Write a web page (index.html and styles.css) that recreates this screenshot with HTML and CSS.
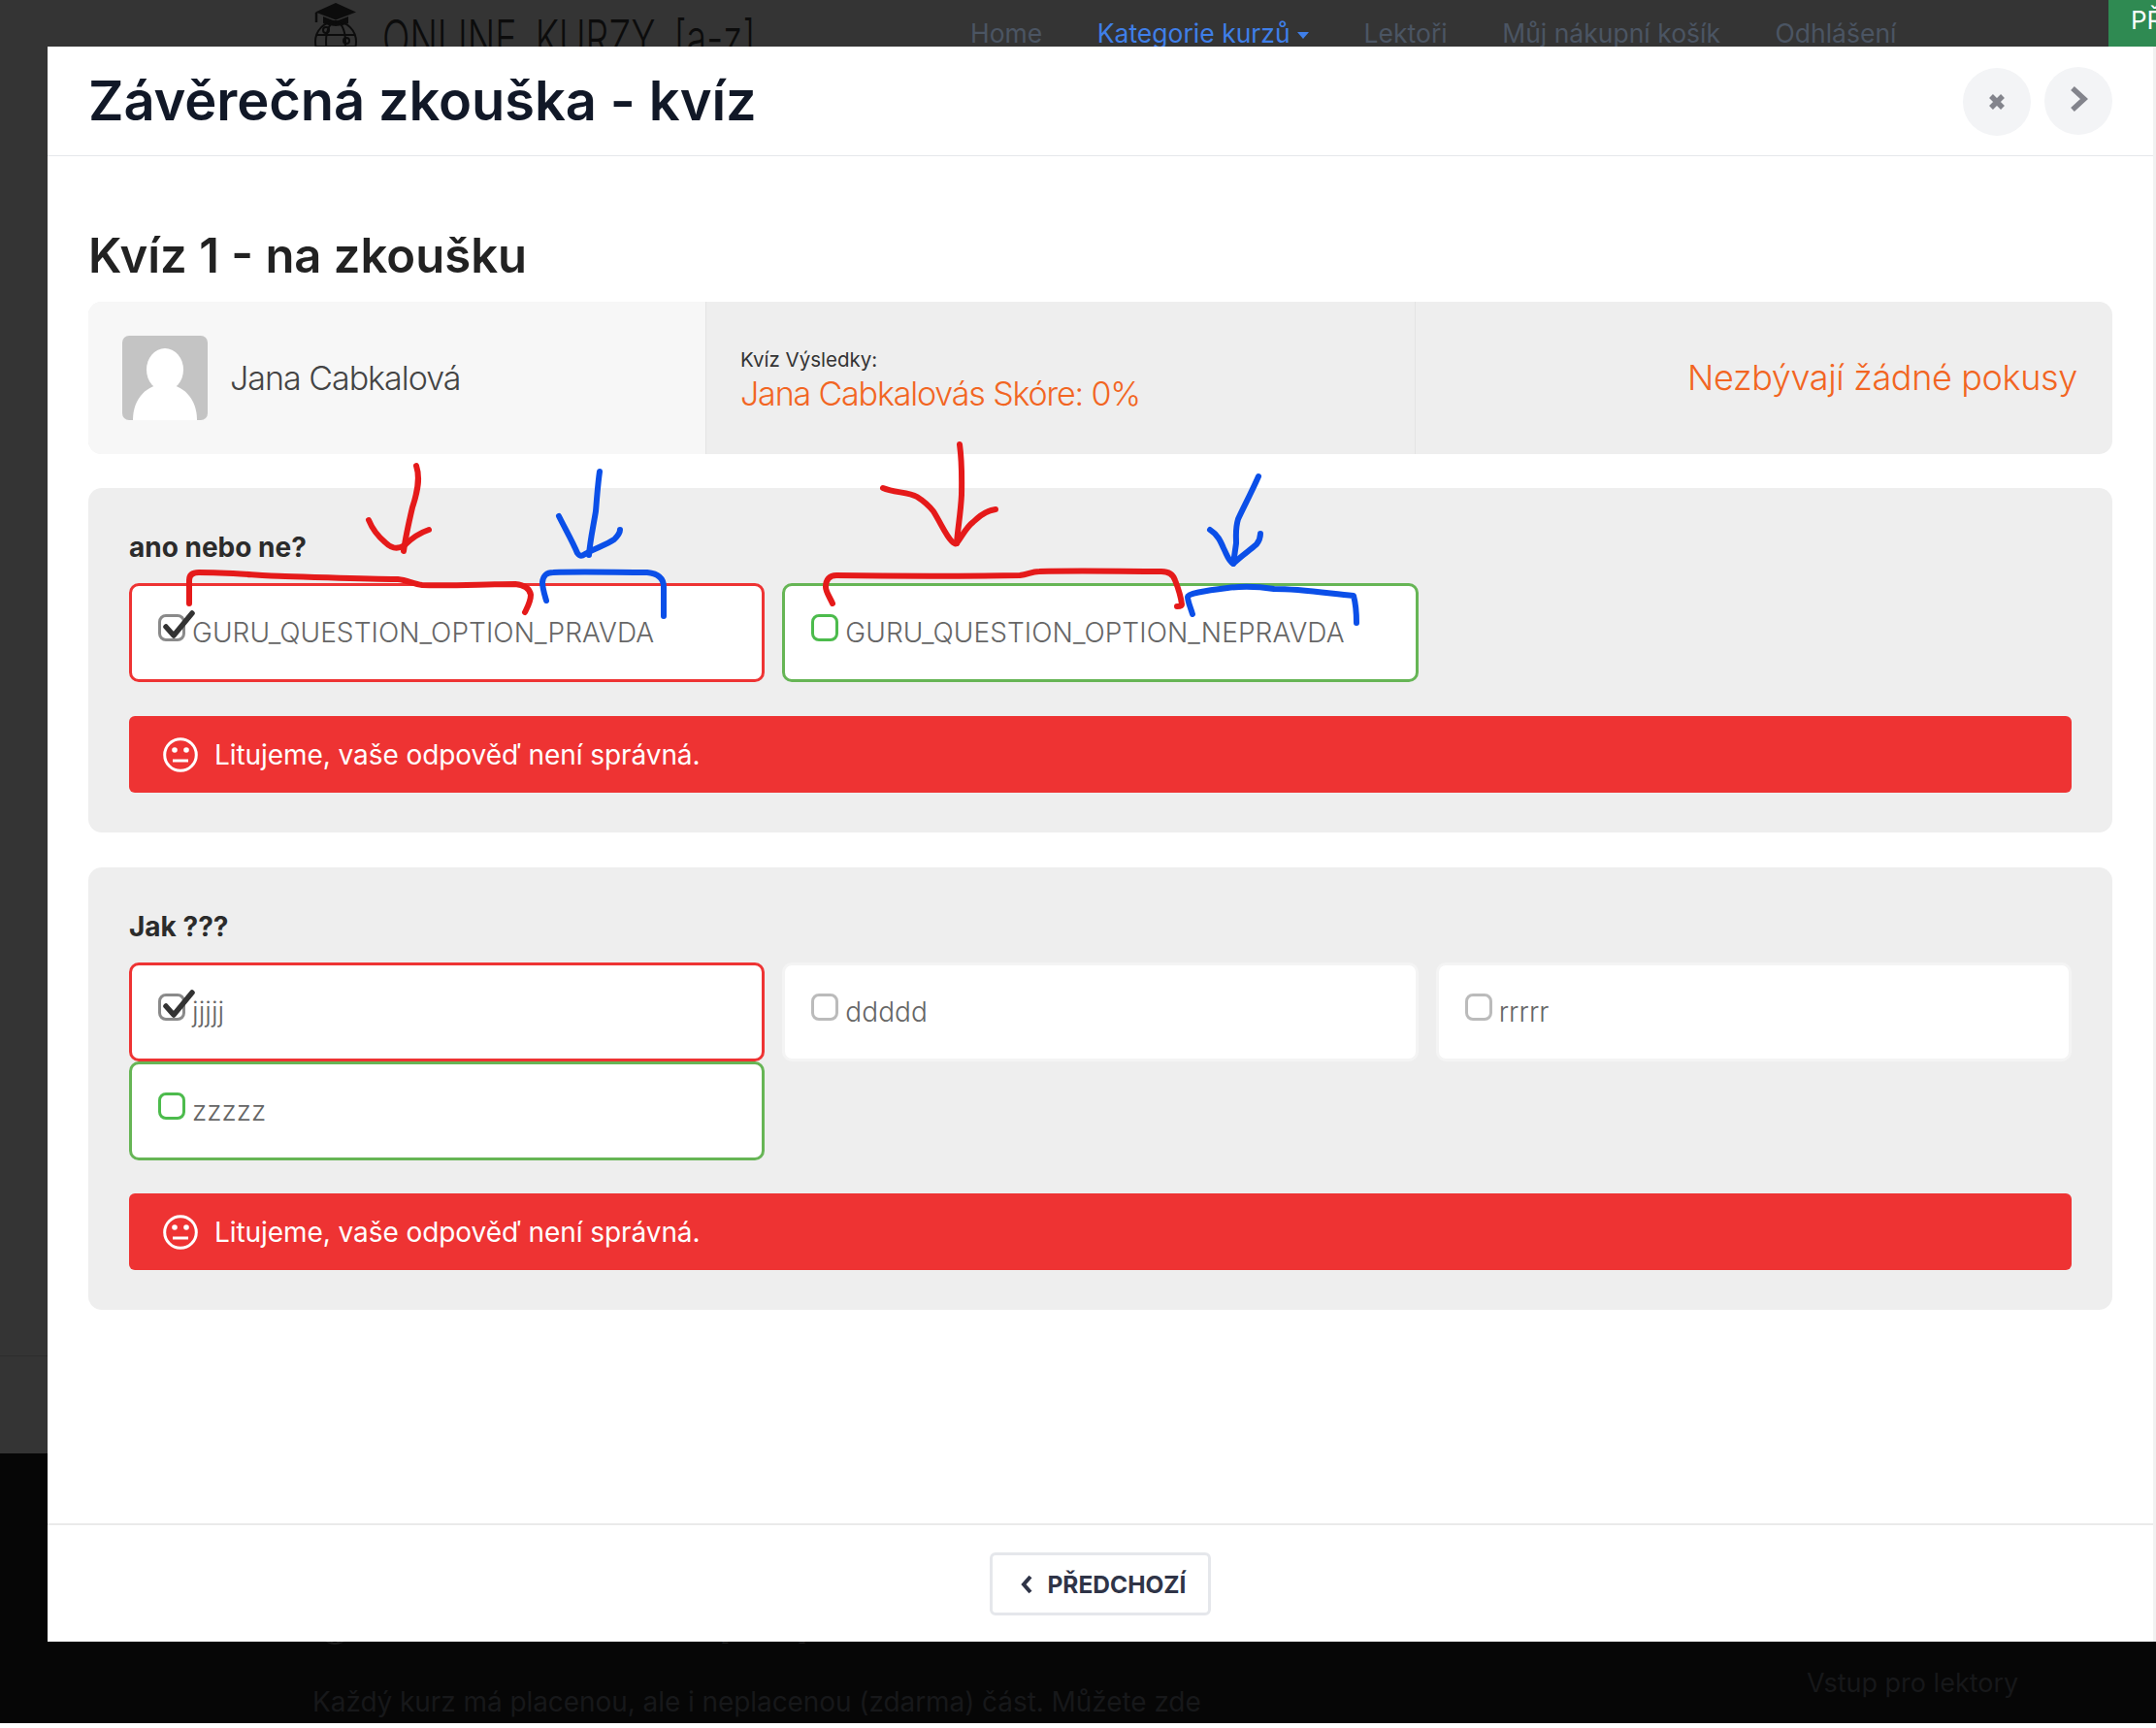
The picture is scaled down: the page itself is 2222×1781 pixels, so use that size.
FILE: index.html
```html
<!DOCTYPE html>
<html lang="cs">
<head>
  <meta charset="UTF-8">
  <title>Závěrečná zkouška - kvíz</title>
  <link rel="stylesheet" href="styles.css">
</head>
<body>
  <!-- page behind the modal -->
  <div class="page">
    <header class="topbar">
      <div class="logo">
        <svg class="logo-icon" viewBox="0 0 48 70" width="48" height="70">
          <g id="logo-mark">
            <path d="M23 3 L44 12.5 L23 20.5 L2 12.5 Z" fill="currentColor"/>
            <path d="M10 17 V24 Q23 30 36 24 V17 L23 22 Z" fill="currentColor"/>
            <path d="M3 13 V23" stroke="currentColor" stroke-width="2.5"/>
            <g fill="none" stroke="currentColor" stroke-width="2">
              <circle cx="23" cy="43" r="21"/>
              <ellipse cx="23" cy="43" rx="10" ry="21"/>
              <path d="M3 36 H43 M3 48 H43"/>
              <circle cx="13" cy="31" r="3"/>
              <circle cx="34" cy="42" r="3"/>
            </g>
          </g>
        </svg>
        <span class="logo-text">ONLINE KURZY [a-z]</span>
      </div>
      <nav class="topnav">
        <a>Home</a>
        <a class="current">Kategorie kurzů <i class="caret"></i></a>
        <a>Lektoři</a>
        <a>Můj nákupní košík</a>
        <a>Odhlášení</a>
      </nav>
      <div class="corner-btn">PŘ</div>
    </header>
    <main class="page-main"></main>
    <footer class="bottom">
      <svg class="bottom-mark" viewBox="0 0 48 70" width="40" height="58">
        <use href="#logo-mark"/>
      </svg>
      <span class="bottom-logo">ONLINE KURZY [a-z]</span>
      <p class="bottom-text">Každý kurz má placenou, ale i neplacenou (zdarma) část. Můžete zde</p>
      <p class="bottom-link">Vstup pro lektory</p>
    </footer>
  </div>

  <div class="modal">
    <div class="modal-head">
      <h1>Závěrečná zkouška - kvíz</h1>
      <div class="head-btns">
        <button class="round-btn close">
          <svg viewBox="0 0 20 20" width="20" height="20"><path d="M4 4 L16 16 M16 4 L4 16" stroke="#83848c" stroke-width="5.5"/></svg>
        </button>
        <button class="round-btn next">
          <svg viewBox="0 0 20 28" width="20" height="28"><path d="M4 3 L16 14 L4 25" fill="none" stroke="#83848c" stroke-width="5.5"/></svg>
        </button>
      </div>
    </div>

    <div class="modal-body">
      <h2>Kvíz 1 - na zkoušku</h2>

      <div class="summary">
        <div class="summary-user">
          <svg class="avatar" viewBox="0 0 88 87" width="88" height="87">
            <rect width="88" height="87" rx="7" fill="#c4c4c4"/>
            <ellipse cx="44" cy="35" rx="19" ry="22" fill="#fff"/>
            <path d="M11 87 C11 64 26 50 44 50 C62 50 77 64 77 87 Z" fill="#fff"/>
          </svg>
          <span class="user-name">Jana Cabkalová</span>
        </div>
        <div class="summary-score">
          <div class="score-label">Kvíz Výsledky:</div>
          <div class="score-value">Jana Cabkalovás Skóre: 0%</div>
        </div>
        <div class="summary-tries">Nezbývají žádné pokusy</div>
      </div>

      <section class="question">
        <h3>ano nebo ne?</h3>
        <div class="options">
          <label class="option wrong">
            <span class="box"><svg class="tick" viewBox="0 0 36 32" width="36" height="32"><path d="M5 20 L13 29 L32 6" fill="none" stroke="#333" stroke-width="5.5" stroke-linecap="round" stroke-linejoin="round"/></svg></span>
            GURU_QUESTION_OPTION_PRAVDA
          </label>
          <label class="option right">
            <span class="box"></span>
            GURU_QUESTION_OPTION_NEPRAVDA
          </label>
        </div>
        <div class="alert">
          <svg viewBox="0 0 36 36" width="36" height="36">
            <circle cx="18" cy="18" r="16.3" fill="none" stroke="#fff" stroke-width="3"/>
            <circle cx="12" cy="13" r="2.8" fill="#fff"/>
            <circle cx="24" cy="13" r="2.8" fill="#fff"/>
            <path d="M10 24 H26" stroke="#fff" stroke-width="3"/>
          </svg>
          Litujeme, vaše odpověď není správná.
        </div>
      </section>

      <section class="question">
        <h3>Jak ???</h3>
        <div class="options">
          <label class="option wrong">
            <span class="box"><svg class="tick" viewBox="0 0 36 32" width="36" height="32"><path d="M5 20 L13 29 L32 6" fill="none" stroke="#333" stroke-width="5.5" stroke-linecap="round" stroke-linejoin="round"/></svg></span>
            jjjjj
          </label>
          <label class="option">
            <span class="box"></span>
            ddddd
          </label>
          <label class="option">
            <span class="box"></span>
            rrrrr
          </label>
          <label class="option right">
            <span class="box"></span>
            zzzzz
          </label>
        </div>
        <div class="alert tight">
          <svg viewBox="0 0 36 36" width="36" height="36">
            <circle cx="18" cy="18" r="16.3" fill="none" stroke="#fff" stroke-width="3"/>
            <circle cx="12" cy="13" r="2.8" fill="#fff"/>
            <circle cx="24" cy="13" r="2.8" fill="#fff"/>
            <path d="M10 24 H26" stroke="#fff" stroke-width="3"/>
          </svg>
          Litujeme, vaše odpověď není správná.
        </div>
      </section>
    </div>

    <div class="modal-foot">
      <button class="prev-btn">
        <svg viewBox="0 0 14 20" width="14" height="20"><path d="M11 2 L4 10 L11 18" fill="none" stroke="#2f3447" stroke-width="4"/></svg>
        PŘEDCHOZÍ
      </button>
    </div>
  </div>

  <!-- hand drawn marks on top of the screenshot -->
  <svg class="marks" viewBox="0 0 2222 1781" width="2222" height="1781">
    <g class="mark-red">
      <path d="M429 480 C433 492 431 505 425 523 C421 540 418 553 416 568"/>
      <path d="M380 536 C384 546 390 553 397 559 C403 565 409 567 417 562 C425 554 433 549 442 546"/>
      <path d="M195 622 L195 598 C195 592 199 590 205 590 C235 590 265 593 294 594 C335 595 375 597 410 597 C420 598 426 602 435 603 C465 604 500 602 531 602 C541 603 546 607 547 613 C547 620 544 625 541 631"/>
      <path d="M989 458 C992 480 991 505 991 510 C990 530 987 545 986 560"/>
      <path d="M910 503 C922 508 936 507 945 512 C953 517 958 522 962 527 C970 540 975 552 981 558 C984 561 985 561 986 560 C992 552 996 543 1003 538 C1010 531 1017 526 1026 525"/>
      <path d="M858 622 C855 615 851 610 851 605 C851 597 855 593 862 593 C925 594 990 594 1051 593 C1060 592 1063 589 1071 589 C1115 588 1155 589 1197 589 C1205 589 1209 592 1211 598 C1215 608 1217 615 1218 623 C1218 625 1215 625 1213 625"/>
    </g>
    <g class="mark-blue">
      <path d="M618 486 C616 500 615 515 614 527 C611 545 608 558 607 572"/>
      <path d="M576 532 C583 546 590 558 595 570 C598 574 600 573 603 571 C613 565 624 562 633 556 C637 552 639 549 639 546"/>
      <path d="M563 619 C561 612 559 606 559 600 C560 593 563 590 570 590 C600 589 635 590 667 590 C677 591 684 595 684 605 L684 635"/>
      <path d="M1297 491 C1290 507 1283 520 1276 535 C1273 545 1274 550 1274 560 L1271 581"/>
      <path d="M1247 546 C1255 551 1258 558 1261 565 C1265 573 1266 578 1271 581 C1279 573 1287 568 1295 561 C1298 557 1299 554 1299 550"/>
      <path d="M1229 633 C1227 626 1224 620 1224 615 C1224 612 1240 609 1265 606 C1280 604 1300 605 1313 607 C1340 607 1365 611 1395 614 C1398 625 1398 633 1398 642"/>
    </g>
  </svg>
</body>
</html>
```

FILE: styles.css
```css
html, body {
  margin: 0;
  padding: 0;
}
body {
  width: 2222px;
  height: 1781px;
  overflow: hidden;
  position: relative;
  background-color: #fff;
  font-family: Inter, "Liberation Sans", sans-serif;
  color: #333;
}
button {
  font-family: inherit;
  cursor: pointer;
}

/* page behind the modal */
.page {
  height: 1776px;
  display: flex;
  flex-direction: column;
  background-color: #343434;
}
.topbar {
  height: 48px;
  flex: none;
  display: flex;
  position: relative;
}
.page-main {
  height: 1350px;
  flex: none;
  box-sizing: border-box;
  border-bottom: 1px solid #2c2c2c;
}
.logo {
  display: flex;
  align-items: flex-start;
  gap: 23px;
  margin-left: 323px;
  width: 677px;
  height: 48px;
  overflow: hidden;
}
.logo-icon {
  flex: none;
  color: #0c0c0c;
}
.logo-text {
  font-size: 52px;
  line-height: 62px;
  font-weight: 300;
  margin-top: 9px;
  color: #0c0c0c;
  white-space: nowrap;
  word-spacing: 12px;
  transform: scaleX(.72);
  transform-origin: left top;
}
.topnav {
  display: flex;
  gap: 56.5px;
  font-size: 26.5px;
  line-height: 32px;
  padding-top: 18px;
  color: #4b5563;
}
.topnav .current {
  color: #3f7fe8;
}
.caret {
  display: inline-block;
  border: 6px solid transparent;
  border-top: 7px solid #3f7fe8;
  border-bottom: 0;
  vertical-align: middle;
}
.corner-btn {
  position: absolute;
  left: 2173px;
  top: 0;
  width: 49px;
  height: 48px;
  overflow: hidden;
  background-color: #2f8a52;
  color: #fff;
  font-size: 26px;
  line-height: 42px;
  padding-left: 23px;
  box-sizing: border-box;
  white-space: nowrap;
}
.bottom {
  height: 278px;
  flex: none;
  margin-top: auto;
  position: relative;
  background-color: #060606;
  color: #17181a;
  font-size: 28px;
}
.bottom p {
  margin: 0;
  white-space: nowrap;
}
.bottom-mark {
  position: absolute;
  left: 326px;
  top: 143px;
  color: #1e1e1e;
}
.bottom-logo {
  position: absolute;
  left: 385px;
  top: 147px;
  font-size: 44px;
  line-height: 54px;
  font-weight: 200;
  word-spacing: 12px;
  white-space: nowrap;
  color: #1e1e1e;
}
.bottom-text {
  position: absolute;
  left: 322px;
  top: 239px;
  letter-spacing: -.07px;
}
.bottom .bottom-link {
  position: absolute;
  left: 1862px;
  top: 220px;
  font-size: 27px;
}

/* modal */
.modal {
  position: absolute;
  left: 49px;
  top: 48px;
  width: 2173px;
  height: 1644px;
  box-sizing: border-box;
  display: flex;
  flex-direction: column;
  background-color: #fff;
  border-right: 3px solid #f1f1f1;
}
.modal-head {
  height: 112px;
  flex: none;
  display: flex;
  align-items: center;
  justify-content: space-between;
  padding: 0 42px;
  border-bottom: 1px solid #e5e7eb;
}
h1 {
  margin: 0;
  font-size: 56px;
  font-weight: 600;
  letter-spacing: -.1px;
  color: #111827;
}
.head-btns {
  display: flex;
  gap: 14px;
}
.round-btn {
  width: 70px;
  height: 70px;
  border: 0;
  padding: 0;
  border-radius: 50%;
  background-color: #f3f4f6;
  display: flex;
  align-items: center;
  justify-content: center;
}
.round-btn.close {
  margin-top: 1px;
}
.round-btn.close svg {
  margin-top: 1px;
}
.round-btn.next svg {
  margin-bottom: 4px;
}
.modal-body {
  flex: 1;
  padding: 73px 42px 0;
}
h2 {
  margin: 0 0 17px;
  font-size: 49px;
  line-height: 60px;
  font-weight: 600;
  color: #222;
}

/* result summary */
.summary {
  height: 157px;
  display: flex;
  border-radius: 14px;
  overflow: hidden;
  background-color: #eee;
  margin-bottom: 35px;
}
.summary-user {
  width: 637px;
  display: flex;
  align-items: center;
  gap: 23px;
  padding-left: 35px;
  box-sizing: border-box;
  background-color: #f7f7f7;
  border-right: 1px solid #e4e4e4;
}
.user-name {
  font-size: 34px;
  font-weight: 300;
  letter-spacing: -1px;
  color: #444;
}
.summary-score {
  width: 731px;
  padding-left: 35px;
  box-sizing: border-box;
  display: flex;
  flex-direction: column;
  justify-content: center;
  border-right: 1px solid #e4e4e4;
}
.score-label {
  font-size: 20.5px;
  line-height: 28px;
  margin-top: 5px;
}
.score-value {
  font-size: 34px;
  line-height: 42px;
  font-weight: 300;
  letter-spacing: -1.15px;
  color: #f26522;
}
.summary-tries {
  flex: 1;
  display: flex;
  align-items: center;
  justify-content: flex-end;
  padding: 0 36px 2px 0;
  font-size: 36px;
  font-weight: 300;
  letter-spacing: -.35px;
  color: #f26522;
}

/* questions */
.question {
  padding: 43px 42px 41px;
  border-radius: 14px;
  background-color: #eee;
  margin-bottom: 36px;
}
.question h3 {
  margin: 0 0 19px;
  font-size: 28px;
  line-height: 36px;
  font-weight: 700;
  color: #2b2b2b;
}
.options {
  display: grid;
  grid-template-columns: repeat(3, 1fr);
  column-gap: 18px;
}
.option {
  height: 102px;
  box-sizing: border-box;
  border: 3px solid #f4f4f4;
  border-radius: 10px;
  background-color: #fff;
  padding: 26px 27px 0;
  display: flex;
  gap: 7px;
  font-size: 28px;
  line-height: 44px;
  font-weight: 300;
  letter-spacing: .07px;
  color: #666;
}
.option.wrong {
  border-color: #ee3333;
}
.option.right {
  border-color: #66b555;
}
.box {
  flex: none;
  position: relative;
  width: 28px;
  height: 28px;
  box-sizing: border-box;
  margin-top: 3px;
  border: 3px solid #bbb;
  border-radius: 8px;
}
.wrong .box {
  border-color: #8a8a8a;
}
.right .box {
  border-color: #4cbb4c;
}
.tick {
  position: absolute;
  left: 0;
  top: -10px;
}
.alert {
  height: 79px;
  box-sizing: border-box;
  margin-top: 35px;
  border-radius: 6px;
  background-color: #ee3333;
  color: #fff;
  display: flex;
  align-items: center;
  gap: 17px;
  padding-left: 35px;
  font-size: 28px;
  letter-spacing: -.07px;
}
.alert.tight {
  margin-top: 34px;
}

/* modal footer */
.modal-foot {
  height: 122px;
  flex: none;
  display: flex;
  align-items: flex-start;
  justify-content: center;
  padding-top: 28px;
  box-sizing: border-box;
  border-top: 2px solid #eaeaea;
}
.prev-btn {
  width: 228px;
  height: 65px;
  display: flex;
  align-items: center;
  justify-content: center;
  gap: 15px;
  padding: 0 0 0 5px;
  border: 3px solid #e5e7eb;
  border-radius: 6px;
  background-color: #fff;
  color: #2f3447;
  font-size: 24.5px;
  font-weight: 700;
}

/* hand drawn marks */
.marks {
  position: absolute;
  left: 0;
  top: 0;
  pointer-events: none;
}
.marks path {
  fill: none;
  stroke-width: 6;
  stroke-linecap: round;
  stroke-linejoin: round;
}
.mark-red path {
  stroke: #e51a1a;
}
.mark-blue path {
  stroke: #0b4fe8;
}
```
